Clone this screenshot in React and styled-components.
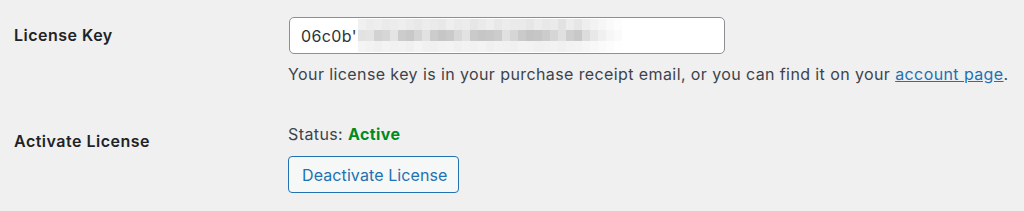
import React from "react";
import styled, { createGlobalStyle } from "styled-components";

const Global = createGlobalStyle`
  html, body { margin: 0; padding: 0; background: #f0f0f1; }
  body { font-family: Inter, "Liberation Sans", Arial, sans-serif; color: #3c434a; letter-spacing: 0.4px; }
`;

const Form = styled.div`
  display: grid;
  grid-template-columns: 274px 1fr;
  padding: 17px 0 0 14px;
  row-gap: 38px;
`;

const Label = styled.div`
  font-size: 16px;
  font-weight: 600;
  color: #1d2327;
  line-height: 22px;
  letter-spacing: 0.5px;
  padding-top: ${(p) => p.$top}px;
`;

const Field = styled.div`
  display: flex;
  flex-direction: column;
  align-items: flex-start;
`;

const InputBox = styled.div`
  box-sizing: border-box;
  width: 436px;
  height: 37px;
  margin-left: 1px;
  background: #fff;
  border: 1px solid #8c8f94;
  border-radius: 5px;
  display: flex;
  align-items: center;
  padding-left: 11px;
  font-size: 16px;
  color: #2c3338;
  overflow: hidden;
`;

const Mosaic = styled.svg`
  display: block;
  margin-left: 1px;
  flex: none;
`;

const Description = styled.p`
  margin: 9px 0 0;
  font-size: 16px;
  line-height: 22px;
  color: #3c434a;
`;

const Link = styled.a`
  color: #2271b1;
  text-decoration: underline;
`;

const Status = styled.div`
  font-size: 16px;
  line-height: 22px;
  color: #3c434a;
`;

const Active = styled.strong`
  font-weight: 700;
  color: #008a20;
`;

const Button = styled.button`
  box-sizing: border-box;
  margin-top: 11px;
  height: 37px;
  padding: 0 10px 0 13px;
  border: 1px solid #2271b1;
  border-radius: 4px;
  background: #f6f7f7;
  color: #2271b1;
  font-family: inherit;
  font-size: 16px;
  letter-spacing: 0.1px;
  cursor: pointer;
`;

const top = [
  0xf0, 0xec, 0xee, 0xea, 0xec, 0xee, 0xeb, 0xe8, 0xec, 0xea, 0xe8, 0xee, 0xea, 0xec,
  0xe6, 0xea, 0xee, 0xe8, 0xec, 0xea, 0xea, 0xe6, 0xec, 0xe8, 0xea, 0xe2, 0xec, 0xe6,
  0xee, 0xf2, 0xf6, 0xfa, 0xfd, 0xff,
];
const mid = [
  0xe2, 0xe4, 0xd2, 0xd6, 0xe4, 0xcc, 0xc8, 0xd4, 0xe2, 0xcc, 0xc6, 0xca, 0xd8, 0xe2,
  0xca, 0xc6, 0xc8, 0xcc, 0xe0, 0xd6, 0xca, 0xc4, 0xc6, 0xcc, 0xd6, 0xe0, 0xce, 0xc8,
  0xdc, 0xe8, 0xf0, 0xf6, 0xfa, 0xff,
];
const bot = [
  0xf4, 0xf2, 0xf0, 0xf3, 0xf1, 0xf2, 0xf0, 0xf4, 0xf1, 0xf0, 0xf2, 0xf3, 0xf0, 0xf2,
  0xf1, 0xf3, 0xf0, 0xf2, 0xf1, 0xf0, 0xf3, 0xf2, 0xf0, 0xf1, 0xf2, 0xf0, 0xf2, 0xf3,
  0xf6, 0xf8, 0xfa, 0xfc, 0xfe, 0xff,
];
const hex = (v) => {
  const h = v.toString(16).padStart(2, "0");
  return `#${h}${h}${h}`;
};

function RedactedKey() {
  const w = 8;
  const cols = top.length;
  return (
    <Mosaic width={cols * w} height={33} viewBox={`0 0 ${cols * w} 33`}>
      {top.map((v, i) => (
        <rect key={`t${i}`} x={i * w} y={0} width={w} height={11} fill={hex(v)} />
      ))}
      {mid.map((v, i) => (
        <rect key={`m${i}`} x={i * w} y={11} width={w} height={11} fill={hex(v)} />
      ))}
      {bot.map((v, i) => (
        <rect key={`b${i}`} x={i * w} y={22} width={w} height={11} fill={hex(v)} />
      ))}
    </Mosaic>
  );
}

export default function App() {
  return (
    <>
      <Global />
      <Form>
        <Label $top={7}>License Key</Label>
        <Field>
          <InputBox>
            06c0b'
            <RedactedKey />
          </InputBox>
          <Description>
            Your license key is in your purchase receipt email, or you can find it on your{" "}
            <Link href="#">account page</Link>.
          </Description>
        </Field>
        <Label $top={7}>Activate License</Label>
        <Field>
          <Status>
            Status: <Active>Active</Active>
          </Status>
          <Button>Deactivate License</Button>
        </Field>
      </Form>
    </>
  );
}
